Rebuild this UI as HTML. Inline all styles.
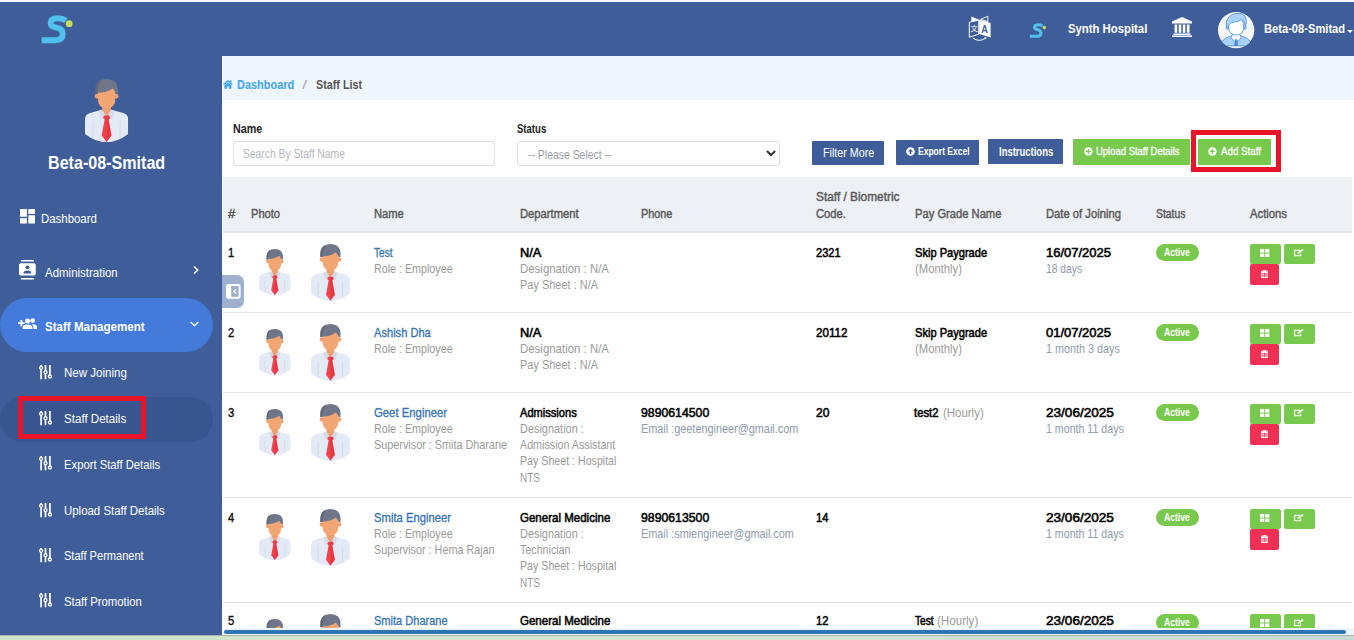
<!DOCTYPE html>
<html lang="en">
<head>
<meta charset="utf-8">
<title>Staff List</title>
<style>
*{box-sizing:border-box;margin:0;padding:0}
html,body{width:1354px;height:640px;overflow:hidden;background:#fff}
body{position:relative;font-family:"Liberation Sans",sans-serif;font-size:13px;color:#000}
.t{position:absolute;white-space:pre;line-height:1;transform-origin:0 0;display:block}
.abs{position:absolute}
svg{position:absolute;display:block;overflow:visible}
header{position:absolute;left:0;top:2px;width:1354px;height:54px;background:#3f5e99}
aside{position:absolute;left:0;top:56px;width:222px;height:579px;background:#3f5e99;overflow:hidden}
main{position:absolute;left:222px;top:56px;width:1132px;height:579px;background:#fff;overflow:hidden}
.crumb{position:absolute;left:1px;top:0;width:1131px;height:44px;background:#eff6ff}
.thead{position:absolute;left:1px;top:121px;width:1129px;height:55px;background:#edf0f5;border-bottom:1px solid #e0e5ec}
.rowline{position:absolute;left:1px;width:1129px;height:1px;background:#e3e7ed}
.pill{position:absolute;left:0;width:213px;border-radius:30px}
.redbox{position:absolute;border:5px solid #e8142a}
.btn{position:absolute;border-radius:1px}
.blue{background:#3f5e99}
.green{background:#7ac94f}
.red{background:#f02f55}
.badge{position:absolute;width:43px;height:17px;border-radius:9px;background:#7ac94f}
.inp{position:absolute;height:25px;border:1px solid #dcdfe3;border-radius:3px;background:#fff}
.foot{position:absolute;left:0;top:635px;width:1354px;height:5px;background:linear-gradient(90deg,#cfe3c8,#d4e6cf 50%,#c9d9d6);border-top:1px solid #aab5a8}
.sbar{position:absolute;left:2px;top:572px;width:1130px;height:7px;background:#edf4fb}
.sbar i{position:absolute;left:0;top:2px;width:1122px;height:4px;border-radius:2px;background:#2e75b6}
</style>
</head>
<body>
<svg width="0" height="0" style="position:absolute">
<defs>
<symbol id="man" viewBox="0 0 43.2 63.2">
  <path d="M0 55 V40.5 Q0 35.5 5 34 L16 31 H27 L38.2 34 Q43.2 35.5 43.2 40.5 V55 Q21.6 71.5 0 55Z" fill="#e4e9f6"/>
  <path d="M8.1 42.5V59.5 M35.1 42.5V59.5" stroke="#d3d9e8" stroke-width="1" fill="none"/>
  <path d="M17.2 24h8.8v9l-4.4 5.5-4.4-5.5z" fill="#ef9f6f"/>
  <path d="M17 30.6 L21.6 37.6 L16.6 40.6 L13.6 32Z M26.2 30.6 L21.6 37.6 L26.6 40.6 L29.6 32Z" fill="#d5dbe7"/>
  <path d="M19 36.4h5.2l1 2.6-1.6 1.4 2.9 16-4.9 6.6-4.9-6.6 2.9-16-1.6-1.4z" fill="#f0424b"/>
  <path d="M21.6 36.4h2.6l1 2.6-1.6 1.4 2.9 16-4.9 6.6z" fill="#e0323c" opacity=".55"/>
  <circle cx="12" cy="17.2" r="2.4" fill="#ef9f6f"/><circle cx="31.2" cy="17.2" r="2.4" fill="#ef9f6f"/>
  <path d="M12.8 7 H30.4 V19 Q30.4 29.4 21.6 29.4 Q12.8 29.4 12.8 19Z" fill="#f2a673"/>
  <path d="M10.4 14.5 V11.2 Q10.4 0 21.6 0 Q32.8 0 32.8 11.2 V14.5 L30.8 14.5 Q29.5 11.5 27.6 9.4 Q22 13.6 12.6 13.8 L12.6 14.5Z" fill="#6f7689"/>
  <path d="M10.4 14.5 V11.2 Q10.4 3 17 .8 Q12.8 5 12.6 14.5Z" fill="#5f667a"/>
</symbol>
<symbol id="sliders" viewBox="0 0 13 14.4">
  <path d="M2.1 0V14.4 M6.5 0V14.4 M10.9 0V11" stroke="#fff" stroke-width="1.7" fill="none"/>
  <circle cx="2.1" cy="2.8" r="1.5" fill="#3f5e99" stroke="#fff" stroke-width="1.3"/>
  <circle cx="6.5" cy="7.2" r="1.5" fill="#3f5e99" stroke="#fff" stroke-width="1.3"/>
  <circle cx="10.9" cy="11.5" r="1.5" fill="#3f5e99" stroke="#fff" stroke-width="1.3"/>
</symbol>
<symbol id="logo" viewBox="0 0 34 32">
  <path d="M26 7.6 Q22.6 5.3 18 5.3 Q10.6 5.3 10.6 9.9 Q10.6 13.3 16.6 14.6 Q22.8 15.8 22.8 20.8 Q22.8 27.3 15 27.3 H1.7" fill="none" stroke="#4fc1ec" stroke-width="5.9"/>
  <circle cx="29.2" cy="10.7" r="3.4" fill="#c5dc5c"/>
</symbol>
<symbol id="pluscircle" viewBox="0 0 10 10">
  <circle cx="5" cy="5" r="4.6" fill="#fff"/>
</symbol>
</defs></svg>
<header>
<svg style="left:40px;top:11px" width="34" height="32"><use href="#logo"/></svg>
<svg style="left:960px;top:6px" width="40" height="40" viewBox="0 0 40 40">
 <path d="M11.3 8.4 L19 11.8 L11.3 13.8Z" fill="#fff"/>
 <path d="M27.9 8.2 L20.6 11.4 L27.9 13.6Z" fill="none" stroke="#fff" stroke-width=".9"/>
 <path d="M9.3 14.3 L18.7 12.1 V26.2 L9.3 29.2Z" fill="none" stroke="#fff" stroke-width="1"/>
 <path d="M19.2 11.6 L30.6 15 V29.4 L19.2 25.9Z" fill="#fff"/>
 <path d="M12.8 30 Q19.2 34.6 25.4 30.2" stroke="#fff" stroke-width="1" fill="none"/>
 <path d="M24.2 29.2 L26.4 29.2 L26 31.6Z" fill="#fff"/>
 <text x="14.1" y="23" font-size="7.4" fill="#fff" text-anchor="middle" font-family="'Liberation Sans','Noto Sans CJK SC',sans-serif">文</text>
 <text x="0" y="0" font-size="11" font-weight="700" fill="#3f5e99" text-anchor="middle" transform="translate(24.7 24.6) scale(.84 1)" font-family="'Liberation Sans',sans-serif">A</text>
</svg>
<svg style="left:1029px;top:20px" width="17.8" height="16.8"><use href="#logo"/></svg>
<span class="t" style="left:1068.0px;top:20.0px;font-size:13px;transform:scaleX(0.8713);font-weight:700;color:#fff;">Synth Hospital</span>
<svg style="left:1172px;top:15px" width="20" height="20" viewBox="0 0 20 20">
 <path d="M10 0 L20 4.6 V6.4 H0 V4.6Z" fill="#fff"/>
 <path d="M2.6 7.4h2.6v8.4H2.6z M6.7 7.4h2.6v8.4H6.7z M10.8 7.4h2.6v8.4h-2.6z M14.9 7.4h2.6v8.4h-2.6z" fill="#fff"/>
 <path d="M1.4 16.4h17.2v1.5H1.4z M0 18.4h20v1.6H0z" fill="#fff"/>
</svg>
<svg style="left:1217.8px;top:9.9px" width="36.3" height="36.3" viewBox="0 0 36 36">
 <defs><clipPath id="cc"><circle cx="18" cy="18" r="18"/></clipPath></defs>
 <circle cx="18" cy="18" r="18" fill="#f5f5f6"/>
 <g clip-path="url(#cc)" stroke="#4b90d8" stroke-width=".8" stroke-linejoin="round">
  <path d="M2 33.6 Q4 26.4 11 24.6 L15 23.2 h6 l4 1.4 Q32 26.4 34 33.6Z" fill="#a8d2fa"/>
  <path d="M14.6 21.5 L13 25.4 L16.4 29.6 L18 27 L19.6 29.6 L23 25.4 L21.4 21.5Z" fill="#fff"/>
  <path d="M17 27.2h2l1 6.4h-4z" fill="#4b90d8" stroke="none"/>
  <path d="M9.8 16.6 Q6.8 10 10 6 Q14 .6 21 1.6 Q23.4 1 25.4 2.6 Q30.2 7 26.6 16.6 Q27.6 11 24 8 Q17 12 10.6 13Z" fill="#a8d2fa"/>
  <path d="M8.4 13.6 Q7.4 17 9.8 18 M27.6 13.6 Q28.6 17 26.2 18" fill="#a8d2fa"/>
  <path d="M10.6 14.6 Q10.6 10.6 15.4 10.2 Q20.6 9.8 23.2 7.4 Q25.8 10 25.4 15 Q25.4 22.8 18 22.8 Q10.6 22.8 10.6 14.6Z" fill="#fff"/>
 </g>
</svg>
<span class="t" style="left:1264.0px;top:19.8px;font-size:13px;transform:scaleX(0.8569);font-weight:700;color:#fff;">Beta-08-Smitad</span>
<svg style="left:1347px;top:27.6px" width="6" height="3" viewBox="0 0 6 3"><path d="M0 0h6L3 3z" fill="#fff"/></svg>
</header>
<aside>
<svg style="left:85px;top:22.8px" width="43.2" height="63.2"><use href="#man"/></svg>
<span class="t" style="left:48.0px;top:97.6px;font-size:18.5px;transform:scaleX(0.8702);font-weight:700;color:#fff;">Beta-08-Smitad</span>
<svg style="left:20px;top:152.7px" width="15" height="14.5" viewBox="0 0 15 14.5">
 <path d="M0 0h6.9v7.8H0z M8.3 0H15v4.9H8.3z M0 9.3h6.9v5.2H0z M8.3 6.3H15v8.2H8.3z" fill="#fff"/></svg>
<span class="t" style="left:41.0px;top:155.8px;font-size:13.5px;transform:scaleX(0.8449);color:#fff;">Dashboard</span>
<svg style="left:19.2px;top:204px" width="16.8" height="19.6" viewBox="0 0 16.8 19.6">
 <path d="M1.9 0h13v1.5h-13z M1.9 18h13v1.6h-13z" fill="#fff"/>
 <rect x="0" y="3.2" width="16.8" height="12.4" rx="1.8" fill="#fff"/>
 <circle cx="8.4" cy="7.3" r="1.9" fill="#3f5e99"/>
 <path d="M4.4 13.4 Q4.4 10.4 8.4 10.4 Q12.4 10.4 12.4 13.4Z" fill="#3f5e99"/></svg>
<span class="t" style="left:44.5px;top:209.7px;font-size:13.5px;transform:scaleX(0.8499);color:#fff;">Administration</span>
<svg style="left:193px;top:210px" width="6" height="8" viewBox="0 0 6 8"><path d="M1 .6 L4.8 4 L1 7.4" stroke="#fff" stroke-width="1.4" fill="none"/></svg>
<div class="pill" style="top:242px;height:54px;background:#447bdb"></div>
<svg style="left:18px;top:262px" width="19" height="11" viewBox="0 0 19 11">
 <path d="M2.4 2.1h1.9v2.1h2.4v1.9H4.3v2.1H2.4V6.1H0V4.2h2.4z" fill="#fff"/>
 <circle cx="9.6" cy="2.9" r="2.5" fill="#fff"/><circle cx="14.6" cy="2.6" r="2.3" fill="#fff"/>
 <path d="M4.6 11 V9.4 Q4.6 6.4 9.6 6.4 Q14.4 6.4 14.4 9.4 V11Z" fill="#fff"/>
 <path d="M15.4 11 V9.2 Q15.4 7.4 13.8 6.4 Q19 6 19 9.2 V11Z" fill="#fff"/></svg>
<span class="t" style="left:45.0px;top:263.6px;font-size:13.5px;transform:scaleX(0.8566);font-weight:700;color:#fff;">Staff Management</span>
<svg style="left:190px;top:265px" width="9" height="6" viewBox="0 0 9 6"><path d="M.7 1 L4.5 4.6 L8.3 1" stroke="#fff" stroke-width="1.3" fill="none"/></svg>
<div class="pill" style="top:341px;height:45px;background:#385590"></div>
<svg style="left:38.7px;top:308.8px" width="13" height="14.4"><use href="#sliders"/></svg>
<span class="t" style="left:64.4px;top:310.0px;font-size:13.5px;transform:scaleX(0.8553);color:#fff;">New Joining</span>
<svg style="left:38.7px;top:354.5px" width="13" height="14.4"><use href="#sliders"/></svg>
<span class="t" style="left:64.4px;top:355.7px;font-size:13.5px;transform:scaleX(0.8575);color:#fff;">Staff Details</span>
<svg style="left:38.7px;top:400.4px" width="13" height="14.4"><use href="#sliders"/></svg>
<span class="t" style="left:64.4px;top:401.6px;font-size:13.5px;transform:scaleX(0.8334);color:#fff;">Export Staff Details</span>
<svg style="left:38.7px;top:446.9px" width="13" height="14.4"><use href="#sliders"/></svg>
<span class="t" style="left:64.4px;top:448.1px;font-size:13.5px;transform:scaleX(0.8466);color:#fff;">Upload Staff Details</span>
<svg style="left:38.7px;top:491.8px" width="13" height="14.4"><use href="#sliders"/></svg>
<span class="t" style="left:64.4px;top:493.0px;font-size:13.5px;transform:scaleX(0.8190);color:#fff;">Staff Permanent</span>
<svg style="left:38.7px;top:537.4px" width="13" height="14.4"><use href="#sliders"/></svg>
<span class="t" style="left:64.4px;top:538.6px;font-size:13.5px;transform:scaleX(0.8383);color:#fff;">Staff Promotion</span>
<div class="redbox" style="left:17.5px;top:340px;width:128.5px;height:43px"></div>
</aside>
<main>
<div class="crumb"></div>
<svg style="left:1.2px;top:24.2px" width="9.8" height="8.8" viewBox="0 0 11 10">
 <path d="M5.5 0 L11 4.6 L10 5.8 L5.5 2 L1 5.8 L0 4.6Z M7.8 .4h1.7v2.6L7.8 1.6z M1.5 6 L5.5 2.7 L9.5 6 V10 H6.5 V7 H4.5 V10 H1.5Z" fill="#3fa4f4"/></svg>
<span class="t" style="left:15.0px;top:22.2px;font-size:13px;transform:scaleX(0.8424);font-weight:700;color:#3fa4f4;">Dashboard</span>
<span class="t" style="left:80.4px;top:22.2px;font-size:13px;transform:scaleX(1.4398);color:#aab0b8;">/</span>
<span class="t" style="left:93.7px;top:22.2px;font-size:13px;transform:scaleX(0.8289);font-weight:700;color:#555;">Staff List</span>
<span class="t" style="left:10.9px;top:67.0px;font-size:12px;transform:scaleX(0.8934);font-weight:700;color:#222;">Name</span>
<div class="inp" style="left:11px;top:85px;width:262px"></div>
<span class="t" style="left:20.6px;top:91.6px;font-size:12.5px;transform:scaleX(0.8255);color:#b4b8be;">Search By Staff Name</span>
<span class="t" style="left:295.3px;top:67.0px;font-size:12px;transform:scaleX(0.7962);font-weight:700;color:#222;">Status</span>
<div class="inp" style="left:295px;top:85px;width:263px"></div>
<span class="t" style="left:306.4px;top:93.4px;font-size:12.5px;transform:scaleX(0.8347);color:#9a9ea5;">-- Please Select --</span>
<svg style="left:543.8px;top:94.2px" width="10.2" height="6.6" viewBox="0 0 10.2 6.6"><path d="M1 1 L5.1 5 L9.2 1" stroke="#333" stroke-width="2" fill="none"/></svg>
<div class="btn blue" style="left:590px;top:85px;width:72px;height:24px"></div>
<span class="t" style="left:600.6px;top:90.2px;font-size:13px;transform:scaleX(0.8242);color:#fff;">Filter More</span>
<div class="btn blue" style="left:674px;top:84px;width:83px;height:25px"></div>
<svg style="left:683.6px;top:91.2px" width="9" height="9" viewBox="0 0 10 10"><circle cx="5" cy="5" r="4.8" fill="#fff"/><path d="M5 2.2 L7.8 5 H5.9 V7.8 H4.1 V5 H2.2Z" fill="#3f5e99"/></svg>
<span class="t" style="left:695.9px;top:89.8px;font-size:11.5px;transform:scaleX(0.7406);font-weight:700;color:#fff;">Export Excel</span>
<div class="btn blue" style="left:766px;top:83px;width:75px;height:25px"></div>
<span class="t" style="left:776.8px;top:89.5px;font-size:12.5px;transform:scaleX(0.7577);font-weight:700;color:#fff;">Instructions</span>
<div class="btn green" style="left:851px;top:83px;width:117px;height:26px"></div>
<svg style="left:861.6px;top:91.3px" width="8.8" height="8.8" viewBox="0 0 10 10"><circle cx="5" cy="5" r="4.8" fill="#fff"/><path d="M4.2 2.2h1.6v2h2v1.6h-2v2H4.2v-2h-2V4.2h2z" fill="#7ac94f"/></svg>
<span class="t" style="left:873.7px;top:89.8px;font-size:11.5px;transform:scaleX(0.8232);-webkit-text-stroke:0.3px;color:#fff;">Upload Staff Details</span>
<div class="btn green" style="left:976px;top:83px;width:73px;height:26px"></div>
<svg style="left:986.4px;top:91.3px" width="8.8" height="8.8" viewBox="0 0 10 10"><circle cx="5" cy="5" r="4.8" fill="#fff"/><path d="M4.2 2.2h1.6v2h2v1.6h-2v2H4.2v-2h-2V4.2h2z" fill="#7ac94f"/></svg>
<span class="t" style="left:998.6px;top:89.8px;font-size:11.5px;transform:scaleX(0.8471);-webkit-text-stroke:0.3px;color:#fff;">Add Staff</span>
<div class="redbox" style="left:969px;top:74px;width:90px;height:42px"></div>
<div class="thead"></div>
<span class="t" style="left:6.2px;top:150.5px;font-size:13px;transform:scaleX(1.0096);-webkit-text-stroke:0.45px;color:#595959;">#</span>
<span class="t" style="left:29.0px;top:150.5px;font-size:13px;transform:scaleX(0.8536);-webkit-text-stroke:0.45px;color:#595959;">Photo</span>
<span class="t" style="left:152.4px;top:150.5px;font-size:13px;transform:scaleX(0.8536);-webkit-text-stroke:0.45px;color:#595959;">Name</span>
<span class="t" style="left:297.5px;top:150.5px;font-size:13px;transform:scaleX(0.8642);-webkit-text-stroke:0.45px;color:#595959;">Department</span>
<span class="t" style="left:419.1px;top:150.5px;font-size:13px;transform:scaleX(0.8326);-webkit-text-stroke:0.45px;color:#595959;">Phone</span>
<span class="t" style="left:593.5px;top:133.6px;font-size:13px;transform:scaleX(0.9124);-webkit-text-stroke:0.45px;color:#595959;">Staff / Biometric</span>
<span class="t" style="left:593.5px;top:150.5px;font-size:13px;transform:scaleX(0.8619);-webkit-text-stroke:0.45px;color:#595959;">Code.</span>
<span class="t" style="left:692.8px;top:150.5px;font-size:13px;transform:scaleX(0.8603);-webkit-text-stroke:0.45px;color:#595959;">Pay Grade Name</span>
<span class="t" style="left:824.0px;top:150.5px;font-size:13px;transform:scaleX(0.8637);-webkit-text-stroke:0.45px;color:#595959;">Date of Joining</span>
<span class="t" style="left:933.9px;top:150.5px;font-size:13px;transform:scaleX(0.7950);-webkit-text-stroke:0.45px;color:#595959;">Status</span>
<span class="t" style="left:1028.1px;top:150.5px;font-size:13px;transform:scaleX(0.8679);-webkit-text-stroke:0.45px;color:#595959;">Actions</span>
<div class="rowline" style="top:176px"></div>
<div class="abs row" style="left:0;top:177px;width:1132px;height:0">
<span class="t" style="left:6.0px;top:12.5px;font-size:13px;transform:scaleX(0.8600);-webkit-text-stroke:0.4px;color:#111;">1</span>
<svg style="left:36.7px;top:15.8px" width="31.6" height="46.2"><use href="#man"/></svg>
<svg style="left:88.6px;top:10.8px" width="38.9" height="56.9"><use href="#man"/></svg>
<span class="t" style="left:152.4px;top:12.5px;font-size:13px;transform:scaleX(0.7801);-webkit-text-stroke:0.3px;color:#3672b3;">Test</span>
<span class="t" style="left:152.4px;top:28.7px;font-size:13px;transform:scaleX(0.8241);color:#9a9a9a;">Role : Employee</span>
<span class="t" style="left:298.0px;top:12.5px;font-size:13px;transform:scaleX(0.9875);-webkit-text-stroke:0.55px;">N/A</span>
<span class="t" style="left:298.0px;top:28.7px;font-size:13px;transform:scaleX(0.8798);color:#9a9a9a;">Designation : N/A</span>
<span class="t" style="left:298.0px;top:45.0px;font-size:13px;transform:scaleX(0.8433);color:#9a9a9a;">Pay Sheet : N/A</span>
<span class="t" style="left:593.6px;top:12.5px;font-size:13px;transform:scaleX(0.8506);-webkit-text-stroke:0.55px;">2321</span>
<span class="t" style="left:693.0px;top:12.5px;font-size:13px;transform:scaleX(0.8527);-webkit-text-stroke:0.55px;">Skip Paygrade</span>
<span class="t" style="left:693.0px;top:28.7px;font-size:13px;transform:scaleX(0.8675);color:#9a9a9a;">(Monthly)</span>
<span class="t" style="left:824.4px;top:12.5px;font-size:13px;transform:scaleX(0.9990);-webkit-text-stroke:0.55px;">16/07/2025</span>
<span class="t" style="left:824.4px;top:28.7px;font-size:13px;transform:scaleX(0.7928);color:#8d9bab;">18 days</span>
<div class="badge" style="left:934px;top:11px"></div>
<span class="t" style="left:942.4px;top:14.5px;font-size:10px;transform:scaleX(0.8596);font-weight:700;color:#fff;">Active</span>
<div class="btn green" style="left:1028px;top:11px;width:31px;height:20px;border-radius:2px"></div>
<svg style="left:1038.4px;top:16px" width="9.4" height="8" viewBox="0 0 9.4 8"><path d="M0 0h4.2v3.5H0z M5.2 0h4.2v3.5H5.2z M0 4.5h4.2V8H0z M5.2 4.5h4.2V8H5.2z" fill="#fff"/></svg>
<div class="btn green" style="left:1062px;top:11px;width:31px;height:20px;border-radius:2px"></div>
<svg style="left:1072.4px;top:15.6px" width="10" height="7.4" viewBox="0 0 10 7.4"><path d="M6 1.2H.6v5.6h6V4.2" stroke="#fff" stroke-width="1.1" fill="none"/><path d="M3.4 4.8 L3.8 3.2 L8.2 0 L9.6 1.2 L5 4.6Z" fill="#fff"/></svg>
<div class="btn red" style="left:1028px;top:31px;width:29px;height:21px;border-radius:2px"></div>
<svg style="left:1038.8px;top:37.2px" width="7" height="8" viewBox="0 0 7 8"><path d="M2.2 0h2.6v.8H7v1H0v-1h2.2z" fill="#fff"/><path d="M.8 2.4h5.4V7.4H.8z" fill="none" stroke="#fff" stroke-width="1.1"/><path d="M2.6 3.4v3 M4.4 3.4v3" stroke="#fff" stroke-width=".7"/></svg>
</div>
<div class="rowline" style="top:256px"></div>
<div class="abs row" style="left:0;top:257px;width:1132px;height:0">
<span class="t" style="left:6.0px;top:12.5px;font-size:13px;transform:scaleX(0.8600);-webkit-text-stroke:0.4px;color:#111;">2</span>
<svg style="left:36.7px;top:15.8px" width="31.6" height="46.2"><use href="#man"/></svg>
<svg style="left:88.6px;top:10.8px" width="38.9" height="56.9"><use href="#man"/></svg>
<span class="t" style="left:152.4px;top:12.5px;font-size:13px;transform:scaleX(0.8544);-webkit-text-stroke:0.3px;color:#3672b3;">Ashish Dha</span>
<span class="t" style="left:152.4px;top:28.7px;font-size:13px;transform:scaleX(0.8241);color:#9a9a9a;">Role : Employee</span>
<span class="t" style="left:298.0px;top:12.5px;font-size:13px;transform:scaleX(0.9875);-webkit-text-stroke:0.55px;">N/A</span>
<span class="t" style="left:298.0px;top:28.7px;font-size:13px;transform:scaleX(0.8798);color:#9a9a9a;">Designation : N/A</span>
<span class="t" style="left:298.0px;top:45.0px;font-size:13px;transform:scaleX(0.8433);color:#9a9a9a;">Pay Sheet : N/A</span>
<span class="t" style="left:593.6px;top:12.5px;font-size:13px;transform:scaleX(0.8924);-webkit-text-stroke:0.55px;">20112</span>
<span class="t" style="left:693.0px;top:12.5px;font-size:13px;transform:scaleX(0.8527);-webkit-text-stroke:0.55px;">Skip Paygrade</span>
<span class="t" style="left:693.0px;top:28.7px;font-size:13px;transform:scaleX(0.8675);color:#9a9a9a;">(Monthly)</span>
<span class="t" style="left:824.4px;top:12.5px;font-size:13px;transform:scaleX(0.9990);-webkit-text-stroke:0.55px;">01/07/2025</span>
<span class="t" style="left:824.4px;top:28.7px;font-size:13px;transform:scaleX(0.8303);color:#8d9bab;">1 month 3 days</span>
<div class="badge" style="left:934px;top:11px"></div>
<span class="t" style="left:942.4px;top:14.5px;font-size:10px;transform:scaleX(0.8596);font-weight:700;color:#fff;">Active</span>
<div class="btn green" style="left:1028px;top:11px;width:31px;height:20px;border-radius:2px"></div>
<svg style="left:1038.4px;top:16px" width="9.4" height="8" viewBox="0 0 9.4 8"><path d="M0 0h4.2v3.5H0z M5.2 0h4.2v3.5H5.2z M0 4.5h4.2V8H0z M5.2 4.5h4.2V8H5.2z" fill="#fff"/></svg>
<div class="btn green" style="left:1062px;top:11px;width:31px;height:20px;border-radius:2px"></div>
<svg style="left:1072.4px;top:15.6px" width="10" height="7.4" viewBox="0 0 10 7.4"><path d="M6 1.2H.6v5.6h6V4.2" stroke="#fff" stroke-width="1.1" fill="none"/><path d="M3.4 4.8 L3.8 3.2 L8.2 0 L9.6 1.2 L5 4.6Z" fill="#fff"/></svg>
<div class="btn red" style="left:1028px;top:31px;width:29px;height:21px;border-radius:2px"></div>
<svg style="left:1038.8px;top:37.2px" width="7" height="8" viewBox="0 0 7 8"><path d="M2.2 0h2.6v.8H7v1H0v-1h2.2z" fill="#fff"/><path d="M.8 2.4h5.4V7.4H.8z" fill="none" stroke="#fff" stroke-width="1.1"/><path d="M2.6 3.4v3 M4.4 3.4v3" stroke="#fff" stroke-width=".7"/></svg>
</div>
<div class="rowline" style="top:336px"></div>
<div class="abs row" style="left:0;top:337px;width:1132px;height:0">
<span class="t" style="left:6.0px;top:12.5px;font-size:13px;transform:scaleX(0.8600);-webkit-text-stroke:0.4px;color:#111;">3</span>
<svg style="left:36.7px;top:15.8px" width="31.6" height="46.2"><use href="#man"/></svg>
<svg style="left:88.6px;top:10.8px" width="38.9" height="56.9"><use href="#man"/></svg>
<span class="t" style="left:152.4px;top:12.5px;font-size:13px;transform:scaleX(0.8719);-webkit-text-stroke:0.3px;color:#3672b3;">Geet Engineer</span>
<span class="t" style="left:152.4px;top:28.7px;font-size:13px;transform:scaleX(0.8241);color:#9a9a9a;">Role : Employee</span>
<span class="t" style="left:152.4px;top:45.0px;font-size:13px;transform:scaleX(0.8329);color:#9a9a9a;">Supervisor : Smita Dharane</span>
<span class="t" style="left:298.0px;top:12.5px;font-size:13px;transform:scaleX(0.8530);-webkit-text-stroke:0.55px;">Admissions</span>
<span class="t" style="left:298.0px;top:28.7px;font-size:13px;transform:scaleX(0.8408);color:#9a9a9a;">Designation :</span>
<span class="t" style="left:298.0px;top:45.0px;font-size:13px;transform:scaleX(0.8243);color:#9a9a9a;">Admission Assistant</span>
<span class="t" style="left:298.0px;top:61.2px;font-size:13px;transform:scaleX(0.8184);color:#9a9a9a;">Pay Sheet : Hospital</span>
<span class="t" style="left:298.0px;top:77.5px;font-size:13px;transform:scaleX(0.7692);color:#9a9a9a;">NTS</span>
<span class="t" style="left:419.1px;top:12.5px;font-size:13px;transform:scaleX(0.9433);-webkit-text-stroke:0.55px;">9890614500</span>
<span class="t" style="left:419.1px;top:28.7px;font-size:13px;transform:scaleX(0.8364);color:#8d9bab;">Email :geetengineer@gmail.com</span>
<span class="t" style="left:593.6px;top:12.5px;font-size:13px;transform:scaleX(0.9267);-webkit-text-stroke:0.55px;">20</span>
<span class="t" style="left:692.4px;top:12.5px;font-size:13px;transform:scaleX(0.8658);-webkit-text-stroke:0.55px;">test2</span>
<span class="t" style="left:720.8px;top:12.5px;font-size:13px;transform:scaleX(0.8805);color:#9a9a9a;">(Hourly)</span>
<span class="t" style="left:824.4px;top:12.5px;font-size:13px;transform:scaleX(1.0436);-webkit-text-stroke:0.55px;">23/06/2025</span>
<span class="t" style="left:824.4px;top:28.7px;font-size:13px;transform:scaleX(0.8176);color:#8d9bab;">1 month 11 days</span>
<div class="badge" style="left:934px;top:11px"></div>
<span class="t" style="left:942.4px;top:14.5px;font-size:10px;transform:scaleX(0.8596);font-weight:700;color:#fff;">Active</span>
<div class="btn green" style="left:1028px;top:11px;width:31px;height:20px;border-radius:2px"></div>
<svg style="left:1038.4px;top:16px" width="9.4" height="8" viewBox="0 0 9.4 8"><path d="M0 0h4.2v3.5H0z M5.2 0h4.2v3.5H5.2z M0 4.5h4.2V8H0z M5.2 4.5h4.2V8H5.2z" fill="#fff"/></svg>
<div class="btn green" style="left:1062px;top:11px;width:31px;height:20px;border-radius:2px"></div>
<svg style="left:1072.4px;top:15.6px" width="10" height="7.4" viewBox="0 0 10 7.4"><path d="M6 1.2H.6v5.6h6V4.2" stroke="#fff" stroke-width="1.1" fill="none"/><path d="M3.4 4.8 L3.8 3.2 L8.2 0 L9.6 1.2 L5 4.6Z" fill="#fff"/></svg>
<div class="btn red" style="left:1028px;top:31px;width:29px;height:21px;border-radius:2px"></div>
<svg style="left:1038.8px;top:37.2px" width="7" height="8" viewBox="0 0 7 8"><path d="M2.2 0h2.6v.8H7v1H0v-1h2.2z" fill="#fff"/><path d="M.8 2.4h5.4V7.4H.8z" fill="none" stroke="#fff" stroke-width="1.1"/><path d="M2.6 3.4v3 M4.4 3.4v3" stroke="#fff" stroke-width=".7"/></svg>
</div>
<div class="rowline" style="top:441px"></div>
<div class="abs row" style="left:0;top:442px;width:1132px;height:0">
<span class="t" style="left:6.0px;top:12.5px;font-size:13px;transform:scaleX(0.8600);-webkit-text-stroke:0.4px;color:#111;">4</span>
<svg style="left:36.7px;top:15.8px" width="31.6" height="46.2"><use href="#man"/></svg>
<svg style="left:88.6px;top:10.8px" width="38.9" height="56.9"><use href="#man"/></svg>
<span class="t" style="left:152.4px;top:12.5px;font-size:13px;transform:scaleX(0.8663);-webkit-text-stroke:0.3px;color:#3672b3;">Smita Engineer</span>
<span class="t" style="left:152.4px;top:28.7px;font-size:13px;transform:scaleX(0.8241);color:#9a9a9a;">Role : Employee</span>
<span class="t" style="left:152.4px;top:45.0px;font-size:13px;transform:scaleX(0.8304);color:#9a9a9a;">Supervisor : Hema Rajan</span>
<span class="t" style="left:298.0px;top:12.5px;font-size:13px;transform:scaleX(0.8863);-webkit-text-stroke:0.55px;">General Medicine</span>
<span class="t" style="left:298.0px;top:28.7px;font-size:13px;transform:scaleX(0.8408);color:#9a9a9a;">Designation :</span>
<span class="t" style="left:298.0px;top:45.0px;font-size:13px;transform:scaleX(0.8221);color:#9a9a9a;">Technician</span>
<span class="t" style="left:298.0px;top:61.2px;font-size:13px;transform:scaleX(0.8184);color:#9a9a9a;">Pay Sheet : Hospital</span>
<span class="t" style="left:298.0px;top:77.5px;font-size:13px;transform:scaleX(0.7692);color:#9a9a9a;">NTS</span>
<span class="t" style="left:419.1px;top:12.5px;font-size:13px;transform:scaleX(0.9433);-webkit-text-stroke:0.55px;">9890613500</span>
<span class="t" style="left:419.1px;top:28.7px;font-size:13px;transform:scaleX(0.8356);color:#8d9bab;">Email :smiengineer@gmail.com</span>
<span class="t" style="left:593.6px;top:12.5px;font-size:13px;transform:scaleX(0.8575);-webkit-text-stroke:0.55px;">14</span>
<span class="t" style="left:824.4px;top:12.5px;font-size:13px;transform:scaleX(1.0436);-webkit-text-stroke:0.55px;">23/06/2025</span>
<span class="t" style="left:824.4px;top:28.7px;font-size:13px;transform:scaleX(0.8176);color:#8d9bab;">1 month 11 days</span>
<div class="badge" style="left:934px;top:11px"></div>
<span class="t" style="left:942.4px;top:14.5px;font-size:10px;transform:scaleX(0.8596);font-weight:700;color:#fff;">Active</span>
<div class="btn green" style="left:1028px;top:11px;width:31px;height:20px;border-radius:2px"></div>
<svg style="left:1038.4px;top:16px" width="9.4" height="8" viewBox="0 0 9.4 8"><path d="M0 0h4.2v3.5H0z M5.2 0h4.2v3.5H5.2z M0 4.5h4.2V8H0z M5.2 4.5h4.2V8H5.2z" fill="#fff"/></svg>
<div class="btn green" style="left:1062px;top:11px;width:31px;height:20px;border-radius:2px"></div>
<svg style="left:1072.4px;top:15.6px" width="10" height="7.4" viewBox="0 0 10 7.4"><path d="M6 1.2H.6v5.6h6V4.2" stroke="#fff" stroke-width="1.1" fill="none"/><path d="M3.4 4.8 L3.8 3.2 L8.2 0 L9.6 1.2 L5 4.6Z" fill="#fff"/></svg>
<div class="btn red" style="left:1028px;top:31px;width:29px;height:21px;border-radius:2px"></div>
<svg style="left:1038.8px;top:37.2px" width="7" height="8" viewBox="0 0 7 8"><path d="M2.2 0h2.6v.8H7v1H0v-1h2.2z" fill="#fff"/><path d="M.8 2.4h5.4V7.4H.8z" fill="none" stroke="#fff" stroke-width="1.1"/><path d="M2.6 3.4v3 M4.4 3.4v3" stroke="#fff" stroke-width=".7"/></svg>
</div>
<div class="rowline" style="top:546px"></div>
<div class="abs row" style="left:0;top:547px;width:1132px;height:0">
<span class="t" style="left:6.0px;top:11.2px;font-size:13px;transform:scaleX(0.8600);-webkit-text-stroke:0.4px;color:#111;">5</span>
<svg style="left:36.7px;top:15.8px" width="31.6" height="46.2"><use href="#man"/></svg>
<svg style="left:88.6px;top:10.8px" width="38.9" height="56.9"><use href="#man"/></svg>
<span class="t" style="left:152.4px;top:11.2px;font-size:13px;transform:scaleX(0.8488);-webkit-text-stroke:0.3px;color:#3672b3;">Smita Dharane</span>
<span class="t" style="left:152.4px;top:27.4px;font-size:13px;transform:scaleX(0.8241);color:#9a9a9a;">Role : Employee</span>
<span class="t" style="left:298.0px;top:11.2px;font-size:13px;transform:scaleX(0.8863);-webkit-text-stroke:0.55px;">General Medicine</span>
<span class="t" style="left:298.0px;top:27.4px;font-size:13px;transform:scaleX(0.8408);color:#9a9a9a;">Designation :</span>
<span class="t" style="left:593.6px;top:11.2px;font-size:13px;transform:scaleX(0.8575);-webkit-text-stroke:0.55px;">12</span>
<span class="t" style="left:693.0px;top:11.2px;font-size:13px;transform:scaleX(0.7843);-webkit-text-stroke:0.55px;">Test</span>
<span class="t" style="left:715.0px;top:11.2px;font-size:13px;transform:scaleX(0.8934);color:#9a9a9a;">(Hourly)</span>
<span class="t" style="left:824.4px;top:11.2px;font-size:13px;transform:scaleX(1.0436);-webkit-text-stroke:0.55px;">23/06/2025</span>
<span class="t" style="left:824.4px;top:27.4px;font-size:13px;transform:scaleX(0.8176);color:#8d9bab;">1 month 11 days</span>
<div class="badge" style="left:934px;top:11px"></div>
<span class="t" style="left:942.4px;top:14.5px;font-size:10px;transform:scaleX(0.8596);font-weight:700;color:#fff;">Active</span>
<div class="btn green" style="left:1028px;top:11px;width:31px;height:20px;border-radius:2px"></div>
<svg style="left:1038.4px;top:16px" width="9.4" height="8" viewBox="0 0 9.4 8"><path d="M0 0h4.2v3.5H0z M5.2 0h4.2v3.5H5.2z M0 4.5h4.2V8H0z M5.2 4.5h4.2V8H5.2z" fill="#fff"/></svg>
<div class="btn green" style="left:1062px;top:11px;width:31px;height:20px;border-radius:2px"></div>
<svg style="left:1072.4px;top:15.6px" width="10" height="7.4" viewBox="0 0 10 7.4"><path d="M6 1.2H.6v5.6h6V4.2" stroke="#fff" stroke-width="1.1" fill="none"/><path d="M3.4 4.8 L3.8 3.2 L8.2 0 L9.6 1.2 L5 4.6Z" fill="#fff"/></svg>
<div class="btn red" style="left:1028px;top:31px;width:29px;height:21px;border-radius:2px"></div>
<svg style="left:1038.8px;top:37.2px" width="7" height="8" viewBox="0 0 7 8"><path d="M2.2 0h2.6v.8H7v1H0v-1h2.2z" fill="#fff"/><path d="M.8 2.4h5.4V7.4H.8z" fill="none" stroke="#fff" stroke-width="1.1"/><path d="M2.6 3.4v3 M4.4 3.4v3" stroke="#fff" stroke-width=".7"/></svg>
</div>
<div class="abs" style="left:0;top:219px;width:22px;height:33px;background:#9fb0cf;border-radius:0 7px 7px 0"></div>
<svg style="left:4px;top:228px" width="14.6" height="14.8" viewBox="0 0 14.6 14.8">
 <rect x="0" y="0" width="14.6" height="14.8" rx="2.2" fill="#fff"/><rect x="5.2" y="2" width="7.4" height="10.8" fill="#9fb0cf"/>
 <path d="M10.2 5.2 L7.8 7.4 L10.2 9.6" stroke="#fff" stroke-width="1.3" fill="none"/></svg>
<div class="sbar"><i></i></div>
</main>
<div class="foot"></div>
</body>
</html>
